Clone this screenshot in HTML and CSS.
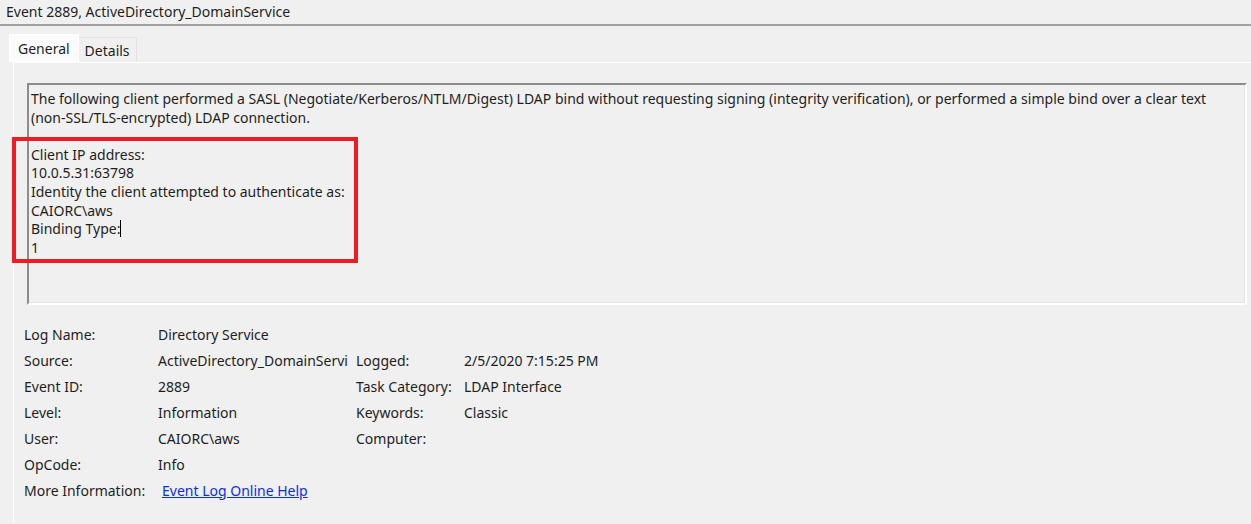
FILE: index.html
```html
<!DOCTYPE html>
<html>
<head>
<meta charset="utf-8">
<link rel="stylesheet" href="styles.css">
</head>
<body>
<div class="title">Event 2889, ActiveDirectory_DomainService</div>
<div class="tabs">
  <div class="tab active">General</div>
  <div class="tab">Details</div>
</div>
<div class="panel">
  <div class="textbox">
    <p>The following client performed a SASL (Negotiate/Kerberos/NTLM/Digest) LDAP bind without requesting signing (integrity verification), or performed a simple bind over a clear text (non-SSL/TLS-encrypted) LDAP connection.</p>
    <p>Client IP address:<br>10.0.5.31:63798<br>Identity the client attempted to authenticate as:<br>CAIORC\aws<br>Binding Type:<span class="caret"></span><br>1</p>
  </div>
  <div class="info">
    <div class="lbl">Log Name:</div><div class="val wide">Directory Service</div>
    <div class="lbl">Source:</div><div class="val">ActiveDirectory_DomainServi</div><div class="lbl">Logged:</div><div class="val">2/5/2020 7:15:25 PM</div>
    <div class="lbl">Event ID:</div><div class="val">2889</div><div class="lbl">Task Category:</div><div class="val">LDAP Interface</div>
    <div class="lbl">Level:</div><div class="val">Information</div><div class="lbl">Keywords:</div><div class="val">Classic</div>
    <div class="lbl">User:</div><div class="val">CAIORC\aws</div><div class="lbl">Computer:</div><div class="val"></div>
    <div class="lbl">OpCode:</div><div class="val wide">Info</div>
    <div class="lbl">More Information:</div><div class="val wide"><a class="link" href="#">Event Log Online Help</a></div>
  </div>
</div>
<div class="highlight"></div>
</body>
</html>
```
FILE: styles.css
```css
html, body {
  margin: 0;
  padding: 0;
  background: #f0f0f0;
  height: 100%;
  overflow: hidden;
}
body {
  font-family: "Noto Sans", "Open Sans", sans-serif;
  font-size: 14px;
  color: #1e1e1e;
  position: relative;
}
.title {
  height: 24px;
  line-height: 24px;
  padding-left: 6px;
  border-bottom: 2px solid #a0a0a0;
  white-space: nowrap;
}
.tabs {
  display: flex;
  align-items: flex-end;
  margin-top: 8px;
  padding-left: 9px;
  height: 28px;
}
.tab {
  height: 25px;
  line-height: 25px;
  padding: 0 6px;
  box-sizing: border-box;
  border: 1px solid #e3e3e3;
  border-bottom: none;
  background: #f0f0f0;
}
.tab.active {
  height: 28px;
  line-height: 28px;
  padding: 0 8px;
  background: #fbfbfb;
  border-color: #ffffff;
  margin-right: -1px;
  position: relative;
  z-index: 1;
}
.panel {
  margin-left: 13px;
  border-top: 1px solid #ffffff;
  border-left: 1px solid #ffffff;
  padding: 20px 0 0 13px;
  height: 460px;
  box-sizing: border-box;
}
.textbox {
  height: 222px;
  box-sizing: border-box;
  border-top: 2px solid #8c8c8c;
  border-left: 2px solid #8c8c8c;
  border-right: 2px solid #ffffff;
  border-bottom: 2px solid #ffffff;
  box-shadow: inset -1px -1px 0 #e3e3e3;
  padding: 5px 2px 0 2px;
  line-height: 18.6px;
  margin-right: 4px;
}
.textbox p {
  margin: 0 0 18.6px 0;
}
.caret {
  display: inline-block;
  width: 1px;
  height: 17px;
  background: #000;
  vertical-align: -3px;
}
.info {
  display: grid;
  grid-template-columns: 134px 198px 108px 1fr;
  grid-auto-rows: 26px;
  margin: 16px 0 0 -3px;
  align-items: center;
}
.info .wide {
  grid-column: 2 / 5;
}
.link {
  color: #0a2ee6;
  text-decoration: underline;
  margin-left: 4px;
}
.highlight {
  position: absolute;
  left: 12px;
  top: 137px;
  width: 346px;
  height: 126px;
  box-sizing: border-box;
  border: 4px solid #ed1c24;
}
```
